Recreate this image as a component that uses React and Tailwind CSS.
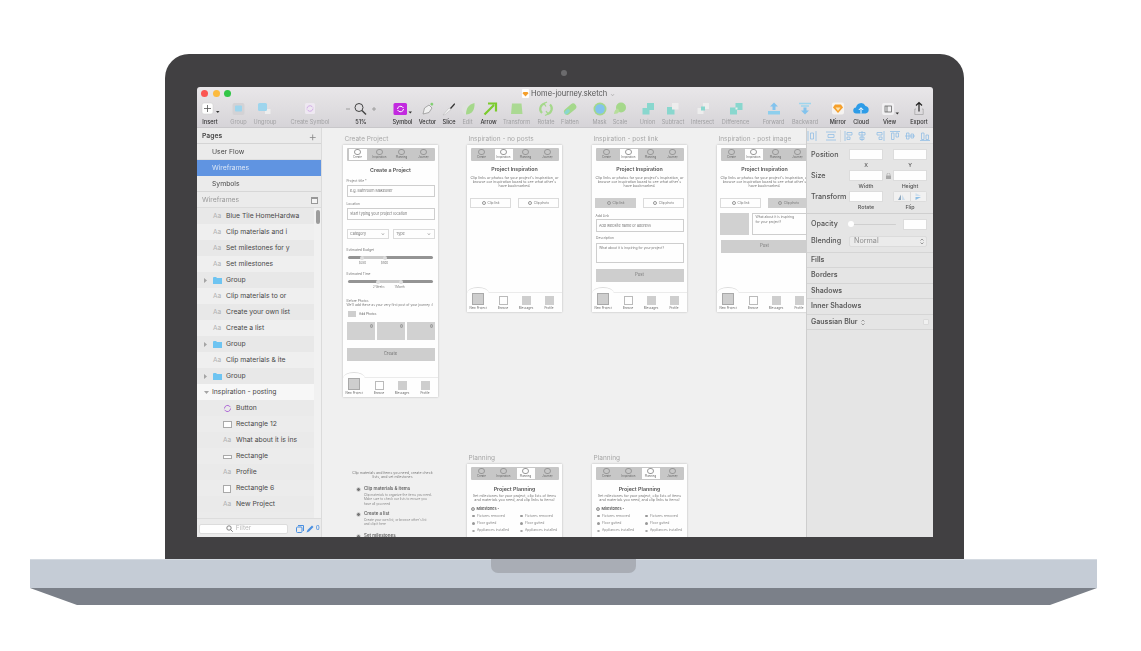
import React from "react";

const G = "#a6d98c";
const T = "#8ad8cf";

const Sync = ({ x, y, c = "#fff" }) => (
  <g fill="none" stroke={c} strokeWidth="1">
    <path d={`M${x + 1} ${y + 4}a3 3 0 0 1 5-2l1 1M${x + 7} ${y + 4}a3 3 0 0 1-5 2l-1-1`} />
  </g>
);

const toolIcons = {
  insert: (
    <>
      <rect x="0" y="3" width="11" height="11" rx="2" fill="#fff" stroke="#ccc" strokeWidth=".5" />
      <path d="M2 8.500h7M5.500 5v7" stroke="#555" strokeWidth=".8" />
      <path d="M14 11h3.500l-1.700 2z" fill="#333" />
    </>
  ),
  group: (
    <>
      <rect x="1.500" y="3" width="12" height="12" rx="2" fill="#d4d3d6" />
      <rect x="4" y="5.500" width="7" height="6" rx="1" fill="#9fd6ee" />
    </>
  ),
  ungroup: (
    <>
      <rect x="8" y="9" width="5.500" height="5" fill="#eeeeee" />
      <rect x="1" y="3" width="9" height="8" rx="1.500" fill="#9fd6ee" />
    </>
  ),
  symbolOff: (
    <>
      <rect x="3" y="3" width="10" height="11" rx="1.500" fill="#efe9f2" />
      <Sync x={4} y={4.500} c="#d3aee8" />
    </>
  ),
  zoom: (
    <>
      <path d="M-7 9h4M19 9h4M21 7v4" stroke="#999" strokeWidth=".9" />
      <circle cx="6" cy="7.500" r="4" fill="none" stroke="#444" strokeWidth="1" />
      <path d="M9 10.500l4 4" stroke="#444" strokeWidth="1.400" />
    </>
  ),
  symbol: (
    <>
      <rect x="-1.500" y="3" width="13.500" height="12" rx="1.500" fill="#c32be0" />
      <Sync x={1.500} y={5} c="#fff" />
      <path d="M13.500 11.500H17l-1.700 2z" fill="#333" />
    </>
  ),
  vector: (
    <>
      <path d="M3 14l1.500-6 4.500-3 3 3-3 4.500z" fill="#f2f2f2" stroke="#8d8d8d" strokeWidth=".7" />
      <path d="M10 4l2-1.500 1.500 1.500-1.500 2z" fill="#80d070" />
    </>
  ),
  slice: (
    <>
      <path d="M2 15l6-7 2 1.500-6 5z" fill="#f5f5f5" stroke="#aaa" strokeWidth=".4" />
      <path d="M9 8l4.500-5 .5 1.500-4 4.500z" fill="#333" />
    </>
  ),
  edit: (
    <>
      <circle cx="7" cy="9" r="5.500" fill="#e2e2e2" />
      <path d="M14.500 3c.5 6-2 11.500-8.500 11.500 0-6 2.500-10 8.500-11.500z" fill={G} />
    </>
  ),
  arrow: <path d="M3.500 14.500L13 5M7 3.500h8v8" fill="none" stroke="#7ccc2e" strokeWidth="2.200" />,
  transform: <path d="M3 3.500h9.500l1 10.500h-11.500z" fill={G} opacity=".9" />,
  rotate: (
    <g fill="none" stroke={G} strokeWidth="2.200">
      <path d="M7 3.500a5.500 5.500 0 0 0-3 9.500" />
      <path d="M9 14a5.500 5.500 0 0 0 3-9.500" />
      <path d="M9 2l-3 1.500 2 3M7 15.500l3-1.500-2-3" strokeWidth="1.300" />
    </g>
  ),
  flatten: (
    <>
      <rect x="1" y="6" width="14" height="6.500" rx="3.200" fill={G} transform="rotate(-40 8 9)" />
      <rect x="1" y="7.500" width="6" height="3.500" rx="1.700" fill={T} transform="rotate(-40 8 9)" />
    </>
  ),
  mask: (
    <>
      <circle cx="8" cy="9" r="6.500" fill={G} />
      <circle cx="8" cy="9" r="4.800" fill="#84c4ee" />
    </>
  ),
  scale: (
    <>
      <circle cx="9" cy="7.500" r="5" fill={G} />
      <path d="M2 14c.2-3 1.500-5 4-5.500l1.500 3c-1.200 1.700-3 2.500-5.500 2.500z" fill="#b8df9d" />
    </>
  ),
  union: <path d="M7 3h7v7H9.500v4.500h-7V8H7z" fill={T} />,
  subtract: (
    <>
      <rect x="2" y="7" width="7.500" height="7.500" fill={T} />
      <rect x="7" y="3" width="6.500" height="6.500" fill="#eeeeee" />
    </>
  ),
  intersect: (
    <>
      <rect x="2.500" y="8" width="6" height="6" fill="#eeeeee" />
      <rect x="8" y="3" width="6" height="6" fill="#eeeeee" />
      <rect x="6" y="6.500" width="4" height="4" fill={T} />
    </>
  ),
  difference: (
    <>
      <rect x="2" y="7.500" width="7" height="7" fill={T} />
      <rect x="7.500" y="3" width="7" height="7" fill={T} />
      <rect x="7.500" y="7.500" width="2" height="2" fill="#eeeeee" />
    </>
  ),
  forward: (
    <>
      <path d="M8 2.500l4 4h-2.500V10h-3V6.500H4z" fill="#84c4ee" />
      <rect x="2" y="11" width="12" height="3.500" fill="#8fd0ee" />
    </>
  ),
  backward: (
    <>
      <path d="M2 3.500h12M4 6h8" stroke="#9fd6ee" strokeWidth="1.400" />
      <path d="M6.500 7.500h3v3H12l-4 4-4-4h2.500z" fill="#84c4ee" />
    </>
  ),
  mirror: (
    <>
      <rect x="2" y="2.500" width="12" height="12" rx="2" fill="#f6f4f2" />
      <path d="M5 4.500h6l2 3-5 5.500-5-5.500z" fill="#f6a02c" />
      <path d="M5.500 7.500h5L8 11z" fill="#fde3ae" />
    </>
  ),
  cloud: (
    <>
      <path d="M3.500 13.500a3 3 0 0 1-.5-6 5 5 0 0 1 9.500-1.500 3.800 3.800 0 0 1 0 7.500z" fill="#2f9de8" />
      <path d="M8 13.500V8M5.800 10l2.200-2.300L10.200 10" fill="none" stroke="#fff" strokeWidth="1" />
    </>
  ),
  view: (
    <>
      <rect x="0" y="3" width="12" height="12" rx="2" fill="#f2f1f3" />
      <rect x="3" y="6" width="6.500" height="6" fill="none" stroke="#555" strokeWidth=".7" />
      <path d="M5 6v6" stroke="#555" strokeWidth=".7" />
      <path d="M13.500 12.500H17l-1.700 2z" fill="#333" />
    </>
  ),
  export: (
    <>
      <path d="M8 2.500v9M5 5.500l3-3 3 3" fill="none" stroke="#222" strokeWidth="1.200" />
      <path d="M5 9H3.800v5.500h8.400V9H11" fill="none" stroke="#999" strokeWidth=".6" />
    </>
  ),
};

const tools = [
  ["Insert", "insert", "w-[26px]", 1],
  ["Group", "group", "w-[31px]", 0],
  ["Ungroup", "ungroup", "w-[22px]", 0],
  ["Create Symbol", "symbolOff", "w-[68px]", 0],
  ["51%", "zoom", "w-[34px]", 1],
  ["Symbol", "symbol", "w-[25px] ml-[12px]", 1],
  ["Vector", "vector", "w-[25px]", 1],
  ["Slice", "slice", "w-[18px]", 1],
  ["Edit", "edit", "w-[19px]", 0],
  ["Arrow", "arrow", "w-[23px]", 1],
  ["Transform", "transform", "w-[33px]", 0],
  ["Rotate", "rotate", "w-[26px]", 0],
  ["Flatten", "flatten", "w-[22px]", 0],
  ["Mask", "mask", "w-[23px] ml-[7px]", 0],
  ["Scale", "scale", "w-[18px]", 0],
  ["Union", "union", "w-[21px] ml-[8px]", 0],
  ["Subtract", "subtract", "w-[30px]", 0],
  ["Intersect", "intersect", "w-[29px]", 0],
  ["Difference", "difference", "w-[37px]", 0],
  ["Forward", "forward", "w-[39px]", 0],
  ["Backward", "backward", "w-[24px]", 0],
  ["Mirror", "mirror", "w-[22px] ml-[10px]", 1],
  ["Cloud", "cloud", "w-[24px]", 1],
  ["View", "view", "w-[33px]", 1],
  ["Export", "export", "w-[26px]", 1],
];

function Toolbar() {
  return (
    <div className="h-[41px] shrink-0 bg-gradient-to-b from-[#eae8ea] to-[#d7d5d9] border-b border-[#c9c8cb] flex flex-col">
      <div className="h-[13px] flex items-center relative shrink-0">
        <div className="flex gap-[4.500px] ml-[4px]">
          <span className="w-[7px] h-[7px] rounded-full bg-[#fc5753]" />
          <span className="w-[7px] h-[7px] rounded-full bg-[#fdbc40]" />
          <span className="w-[7px] h-[7px] rounded-full bg-[#33c748]" />
        </div>
        <div className="absolute left-[325px] top-[1px] flex items-center gap-[2px] text-[7.500px] text-[#555]">
          <svg width="7" height="9" viewBox="0 0 7 9">
            <rect width="7" height="9" rx="1" fill="#fff" />
            <path d="M1.500 3h4l1 1.300L3.500 7.500.5 4.300z" fill="#f6a02c" />
          </svg>
          Home-journey.sketch
          <span className="text-[#aaa] text-[6px] ml-[1px]">⌄</span>
        </div>
      </div>
      <div className="flex flex-1">
        {tools.map(([label, icon, cls, on]) => (
          <div key={label} className={`${cls} flex flex-col items-center shrink-0`}>
            <svg width="44" height="16" viewBox="-14 0 44 16" className="shrink-0 overflow-visible">
              {toolIcons[icon]}
            </svg>
            <span className={`whitespace-nowrap text-[5.600px] leading-[9px] mt-[1.500px] ${on ? "text-[#333] font-medium" : "text-[#a2a2a4]"}`}>{label}</span>
          </div>
        ))}
      </div>
    </div>
  );
}

const Folder = () => (
  <svg width="9" height="7" viewBox="0 0 9 7"><path d="M0 1q0-1 1-1h2l1 1h5v6H0z" fill="#6fc5f2" /></svg>
);
const Tri = ({ open }) => (
  <svg width="5" height="5" viewBox="0 0 5 5">
    <path d={open ? "M0 1h5L2.500 4z" : "M1 0l3 2.500L1 5z"} fill="#a5a5a5" />
  </svg>
);

const layers = [
  ["Aa", "Blue Tile HomeHardwa"],
  ["Aa", "Clip materials and i"],
  ["Aa", "Set milestones for y"],
  ["Aa", "Set milestones"],
  ["folder", "Group"],
  ["Aa", "Clip materials to or"],
  ["Aa", "Create your own list"],
  ["Aa", "Create a list"],
  ["folder", "Group"],
  ["Aa", "Clip materials & ite"],
  ["folder", "Group"],
];
const nested = [
  ["sync", "Button"],
  ["rect", "Rectangle 12"],
  ["Aa", "What about it is ins"],
  ["flat", "Rectangle"],
  ["Aa", "Profile"],
  ["box", "Rectangle 6"],
  ["Aa", "New Project"],
];

function LayerGlyph({ type }) {
  if (type === "Aa") return <span className="text-[6.500px] text-[#b0b0b0]">Aa</span>;
  if (type === "sync")
    return (
      <svg width="9" height="9" viewBox="0 0 9 9" fill="none" stroke="#b06ad8" strokeWidth="1">
        <path d="M1.500 4.500a3 3 0 0 1 5-2.300l1 1M7.500 4.500a3 3 0 0 1-5 2.300l-1-1" />
      </svg>
    );
  if (type === "rect") return <span className="block w-[9px] h-[7px] border border-[#aaa] bg-white" />;
  if (type === "flat") return <span className="block w-[9px] h-[4px] border border-[#aaa] bg-white" />;
  return <span className="block w-[8px] h-[8px] border border-[#aaa] bg-white" />;
}

function Sidebar() {
  return (
    <aside className="w-[125px] shrink-0 flex flex-col bg-[#ececec] border-r border-[#dcdcdc] overflow-hidden text-[6.800px] text-[#4a4a4a]">
      <div className="h-[16px] shrink-0 flex items-center justify-between pl-[5px] pr-[4px] pt-[1px] font-semibold border-b border-[#d5d5d5]">
        Pages
        <span className="text-[13px] font-light text-[#888] leading-none">+</span>
      </div>
      <div className="h-[16px] shrink-0 flex items-center pl-[15px] pt-[1px] border-b border-[#e0e0e0]">User Flow</div>
      <div className="h-[16px] shrink-0 flex items-center pl-[15px] pt-[1px] bg-[#6195e2] text-[#dce7f7]">Wireframes</div>
      <div className="h-[16px] shrink-0 flex items-center pl-[15px] pt-[1px] border-b border-[#d8d8d8]">Symbols</div>
      <div className="h-[16px] shrink-0 flex items-center justify-between pl-[5px] pr-[3px] pt-[2px] text-[#9b9b9b] border-b border-[#dddddd]">
        Wireframes
        <span className="w-[7px] h-[7px] border border-[#999] bg-[#f5f5f5] border-t-2" />
      </div>
      <div className="flex flex-1 min-h-0">
        <div className="w-[117px] shrink-0 overflow-hidden">
          {layers.map(([type, name], i) => (
            <div key={i} className="h-[16px] pt-[1px] flex items-center odd:bg-[#e9e9e9] even:bg-[#f0f0f0]">
              <div className="w-[16px] flex justify-end pr-[5px]">{type === "folder" && <Tri />}</div>
              <div className="w-[13px]">{type === "folder" ? <Folder /> : <LayerGlyph type="Aa" />}</div>
              <span className="whitespace-nowrap">{name}</span>
            </div>
          ))}
          <div className="h-[16px] pt-[1px] flex items-center bg-[#f8f8f8]">
            <div className="w-[15px] flex justify-end pr-[3px]"><Tri open /></div>
            <span className="whitespace-nowrap">Inspiration - posting</span>
          </div>
          {nested.map(([type, name], i) => (
            <div key={i} className="h-[16px] pt-[1px] flex items-center odd:bg-[#ebebeb] even:bg-[#ededed]">
              <div className="w-[26px]" />
              <div className="w-[13px]"><LayerGlyph type={type} /></div>
              <span className="whitespace-nowrap">{name}</span>
            </div>
          ))}
        </div>
        <div className="flex-1 flex justify-center pt-[2px] bg-[#f2f2f2]">
          <span className="w-[4px] h-[14px] rounded-full bg-[#9d9d9d]" />
        </div>
      </div>
      <div className="h-[19px] shrink-0 flex items-center gap-[8px] pl-[2px] pt-[1px] bg-[#ececec] border-t border-[#dedede]">
        <div className="w-[89px] h-[10px] bg-white rounded-[2px] border border-[#ddd] flex items-center justify-center gap-[3px] pr-[10px] text-[6.500px] text-[#bbb]">
          <svg width="7" height="7" viewBox="0 0 7 7" fill="none" stroke="#777" strokeWidth=".9"><circle cx="3" cy="3" r="2.200" /><path d="M4.600 4.600L6.800 6.800" /></svg>
          Filter
        </div>
        <div className="flex items-center gap-[2px] text-[5.500px] text-[#4a90e2] font-semibold">
          <svg width="8" height="8" viewBox="0 0 8 8" fill="none" stroke="#4a90e2" strokeWidth="1"><rect x=".500" y="2" width="5.500" height="5.500" rx="1" /><path d="M2 .500h5.500V6" /></svg>
          <svg width="8" height="8" viewBox="0 0 8 8"><path d="M.500 7.500l1-2.500 4.500-4.500 1.500 1.500L3 6.500z" fill="#4a90e2" /></svg>
          0
        </div>
      </div>
    </aside>
  );
}

function Tabs({ active }) {
  const names = ["Create", "Inspiration", "Planning", "Journey"];
  return (
    <div className="h-[13.500px] mx-[3.500px] mt-[2.500px] bg-[#c8c8c8] rounded-[1px] flex shrink-0 py-[1.300px]">
      {names.map((n) => (
        <div key={n} className="flex-1 flex justify-center">
          <div className={`w-[18px] flex flex-col items-center ${n === active ? "bg-white" : ""}`}>
            <span className="w-[6.500px] h-[6.500px] rounded-full border-[0.5px] border-[#999]" />
            <span className="text-[2.800px] leading-[4px] text-[#666] whitespace-nowrap">{n}</span>
          </div>
        </div>
      ))}
    </div>
  );
}

function NavBar() {
  const items = [["Browse", "bg-white border-[0.5px] border-[#bbb]"], ["Messages", "bg-[#cfcfcf]"], ["Profile", "bg-[#cfcfcf]"]];
  return (
    <div className="relative h-[20.500px] border-t border-[#ececec] flex shrink-0 px-[3px] pt-[0.5px]">
      <span className="absolute left-0 -top-[6px] w-[22px] h-[6px] bg-white [border-radius:50%_50%_0_0/100%_100%_0_0] border-t border-[#dedede]" />
      <div className="w-[16px] flex flex-col items-center relative">
        <span className="w-[12.500px] h-[12.500px] -mt-[0.5px] bg-[#cfcfcf] border-[0.5px] border-[#aaa] shrink-0" />
        <span className="text-[3px] leading-[4px] mt-[1px] whitespace-nowrap text-[#666]">New Project</span>
      </div>
      <div className="flex-1 flex pl-[7px] gap-[3px]">
        {items.map(([n, cls]) => (
          <div key={n} className="w-[20px] flex flex-col items-center pt-[3px]">
            <span className={`w-[9px] h-[9px] ${cls}`} />
            <span className="text-[3px] leading-[4px] mt-[1px] text-[#666]">{n}</span>
          </div>
        ))}
      </div>
    </div>
  );
}

const BoardTitle = ({ children, cls = "mt-[4px]" }) => (
  <div className={`text-center text-[5.300px] font-semibold text-[#555] leading-[8px] ${cls}`}>{children}</div>
);
const BoardBody = ({ children, cls = "mt-[2.500px]" }) => (
  <div className={`text-center text-[3.650px] leading-[4.400px] text-[#777] whitespace-pre-line ${cls}`}>{children}</div>
);
const Small = ({ children, cls = "" }) => (
  <div className={`text-[3.300px] leading-[4px] text-[#777] ${cls}`}>{children}</div>
);

function ClipButtons({ active }) {
  const btn = (label) => (
    <div className={`w-[41px] h-[9.500px] flex items-center justify-center gap-[1.500px] text-[3.200px] text-[#777] ${active === label ? "bg-[#cfcfcf]" : "bg-white border border-[#dcdcdc]"}`}>
      <span className="w-[4.500px] h-[4.500px] rounded-full border-[0.5px] border-[#999]" />
      {label}
    </div>
  );
  return (
    <div className="flex justify-between mx-[3px] mt-[9.500px]">
      {btn("Clip link")}
      {btn("Clip photo")}
    </div>
  );
}

const inspireCopy = "Clip links or photos for your project's inspiration, or\nbrowse our inspiration board to see what other's\nhave bookmarked.";

function Field({ label, box, children, cls = "" }) {
  return (
    <div className={`mx-[3.500px] ${cls}`}>
      <Small>{label}</Small>
      <div className={`${box} border border-[#cfcfcf] flex items-center px-[2.500px] text-[3.700px] text-[#777]`}>{children}</div>
    </div>
  );
}

function Slider({ a, b, fill, h1, h2, labels }) {
  return (
    <div className="mx-[5px] mt-[4px]">
      <div className="relative h-[3px] rounded-full bg-[#959595]">
        <span className={`absolute top-0 h-[3px] bg-[#cbcbcb] ${fill}`} />
        <span className={`absolute -top-[0.5px] w-[4px] h-[4px] rounded-full bg-[#dedede] ${h1}`} />
        <span className={`absolute -top-[0.5px] w-[4px] h-[4px] rounded-full bg-[#dedede] ${h2}`} />
      </div>
      <div className={`flex text-[2.800px] leading-[4px] text-[#777] mt-[1.500px] ${labels}`}>
        <span>{a}</span>
        <span>{b}</span>
      </div>
    </div>
  );
}

function CreateBoard() {
  return (
    <div className="h-full flex flex-col">
      <Tabs active="Create" />
      <BoardTitle cls="mt-[5px]">Create a Project</BoardTitle>
      <Field label="Project title *" box="h-[12px] mt-[2px]" cls="mt-[5px]">e.g. Bathroom Makeover</Field>
      <Field label="Location" box="h-[12px] mt-[2px]" cls="mt-[5px]">Start typing your project location</Field>
      <div className="flex justify-between mx-[3.500px] mt-[9px] text-[3.700px] text-[#777]">
        <div className="w-[42px] h-[9.500px] border border-[#dcdcdc] flex items-center justify-between px-[2.500px]">Category<span className="text-[5px] leading-none">⌄</span></div>
        <div className="w-[42px] h-[9.500px] border border-[#dcdcdc] flex items-center justify-between px-[2.500px]">Type<span className="text-[5px] leading-none">⌄</span></div>
      </div>
      <Small cls="mx-[3.500px] mt-[9.500px]">Estimated Budget</Small>
      <Slider a="$350" b="$500" fill="left-[14px] w-[23px]" h1="left-[12px]" h2="left-[35px]" labels="pl-[11px] gap-[15px]" />
      <Small cls="mx-[3.500px] mt-[7.500px]">Estimated Time</Small>
      <Slider a="2 Weeks" b="1 Month" fill="left-[30px] w-[23px]" h1="left-[28px]" h2="left-[51px]" labels="pl-[25px] gap-[10px]" />
      <Small cls="mx-[3.500px] mt-[10.500px]">Before Photos</Small>
      <Small cls="mx-[3.500px] whitespace-nowrap">We'll add these as your very first post of your journey :)</Small>
      <div className="flex items-center gap-[3px] mx-[5px] mt-[3.750px] text-[3.200px] text-[#666]">
        <span className="w-[8px] h-[6.500px] bg-[#cfcfcf]" />
        Add Photos
      </div>
      <div className="flex gap-[2px] mx-[3.500px] mt-[4.750px]">
        {[0, 1, 2].map((i) => (
          <div key={i} className="relative flex-1 h-[18px] bg-[#d2d2d2]">
            <span className="absolute top-[2px] right-[1.500px] w-[3.500px] h-[3.500px] rounded-full bg-[#bbb] border-[0.5px] border-[#999]" />
          </div>
        ))}
      </div>
      <div className="mx-[3.500px] mt-[8px] h-[13px] bg-[#cfcfcf] flex items-center justify-center text-[4.300px] text-[#777]">Create</div>
      <div className="flex-1" />
      <NavBar />
    </div>
  );
}

function NoPostsBoard() {
  return (
    <div className="h-full flex flex-col">
      <Tabs active="Inspiration" />
      <BoardTitle>Project Inspiration</BoardTitle>
      <BoardBody>{inspireCopy}</BoardBody>
      <ClipButtons />
      <div className="flex-1" />
      <NavBar />
    </div>
  );
}

function PostLinkBoard() {
  return (
    <div className="h-full flex flex-col">
      <Tabs active="Inspiration" />
      <BoardTitle>Project Inspiration</BoardTitle>
      <BoardBody>{inspireCopy}</BoardBody>
      <ClipButtons active="Clip link" />
      <Field label="Add Link" box="h-[13px] mt-[1px]" cls="mt-[6.300px]">Add website name or address</Field>
      <Small cls="mx-[4px] mt-[4px]">Description</Small>
      <div className="mx-[3.500px] mt-[3px] h-[20px] border border-[#cfcfcf] px-[2.500px] py-[1.500px] text-[3.300px] text-[#777]">What about it is inspiring for your project?</div>
      <div className="mx-[3.500px] mt-[6px] h-[13px] bg-[#cfcfcf] flex items-center justify-center text-[4.300px] text-[#777]">Post</div>
      <div className="flex-1" />
      <NavBar />
    </div>
  );
}

function PostImageBoard() {
  return (
    <div className="h-full flex flex-col">
      <Tabs active="Inspiration" />
      <BoardTitle>Project Inspiration</BoardTitle>
      <BoardBody>{inspireCopy}</BoardBody>
      <ClipButtons active="Clip photo" />
      <div className="flex gap-[3px] mx-[3px] mt-[5px] h-[22px]">
        <div className="w-[29px] bg-[#d2d2d2]" />
        <div className="flex-1 border border-[#cfcfcf] px-[2.500px] py-[1.500px] text-[3.300px] leading-[4.500px] text-[#777]">What about it is inspiring<br />for your project?</div>
      </div>
      <div className="mx-[4px] mt-[5px] h-[13.500px] bg-[#cfcfcf] flex items-center justify-center text-[4.300px] text-[#777]">Post</div>
      <div className="flex-1" />
      <NavBar />
    </div>
  );
}

function PlanningBoard() {
  const rows = [["Fixtures removed", 1], ["Floor gutted", 1], ["Appliances installed", 0]];
  return (
    <div className="flex flex-col">
      <Tabs active="Planning" />
      <BoardTitle cls="mt-[4.700px]">Project Planning</BoardTitle>
      <BoardBody cls="mt-[1px]">{"Set milestones for your project, clip lists of items\nand materials you need, and clip links to items!"}</BoardBody>
      <div className="flex items-center gap-[1.500px] mx-[4px] mt-[3.800px] h-[4.600px] text-[3.800px] font-semibold text-[#555]">
        <span className="w-[4px] h-[4px] rounded-full bg-[#ccc] border-[0.5px] border-[#999]" />
        Milestones -
      </div>
      <div className="grid grid-cols-[48px_1fr] mx-[5px] mt-[1.600px]">
        {rows.flatMap(([t, on]) => [0, 1].map((c) => (
          <div key={t + c} className="flex items-center gap-[2.500px] h-[7.400px] text-[3.400px] text-[#888] whitespace-nowrap">
            <span className={`w-[2.500px] h-[2.500px] rounded-full ${on ? "bg-[#999]" : "bg-white border-[0.5px] border-[#aaa]"}`} />
            {t}
          </div>
        )))}
      </div>
    </div>
  );
}

function Artboard({ title, cls, children }) {
  return (
    <div className={`absolute w-[95px] ${cls}`}>
      <div className="absolute -top-[10px] left-[1.500px] text-[6.500px] leading-[8px] text-[#a8a8a8] whitespace-nowrap">{title}</div>
      <div className="h-full bg-white shadow-[0_0_2px_rgba(0,0,0,0.25)]">{children}</div>
    </div>
  );
}

function IntroStep({ title, lines, cls = "" }) {
  return (
    <div className={`flex gap-[3px] ${cls}`}>
      <span className="w-[5px] h-[5px] mt-[1px] rounded-full bg-[#777] border border-[#ddd] shrink-0" />
      <div>
        <div className="text-[4.450px] leading-[6px] font-semibold text-[#666] whitespace-nowrap">{title}</div>
        <div className="mt-[1px]">
          {lines.map((l) => (
            <div key={l} className="text-[3.150px] leading-[4.200px] text-[#888] whitespace-nowrap">{l}</div>
          ))}
        </div>
      </div>
    </div>
  );
}

function Canvas() {
  return (
    <main className="relative flex-1 min-w-0 overflow-hidden bg-[#f1f1f1]">
      <Artboard title="Create Project" cls="left-[21px] top-[17px] h-[252px]"><CreateBoard /></Artboard>
      <Artboard title="Inspiration - no posts" cls="left-[145px] top-[17px] h-[167px]"><NoPostsBoard /></Artboard>
      <Artboard title="Inspiration - post link" cls="left-[270px] top-[17px] h-[167px]"><PostLinkBoard /></Artboard>
      <Artboard title="Inspiration - post image" cls="left-[395px] top-[17px] h-[167px]"><PostImageBoard /></Artboard>
      <Artboard title="Planning" cls="left-[145px] top-[336px] h-[100px]"><PlanningBoard /></Artboard>
      <Artboard title="Planning" cls="left-[270px] top-[336px] h-[100px]"><PlanningBoard /></Artboard>
      <div className="absolute left-[28px] top-[343px] w-[85px]">
        <div className="text-center text-[3.550px] leading-[4.400px] text-[#777]">Clip materials and items you need, create check<br />lists, and set milestones</div>
        <IntroStep cls="mt-[6.400px] ml-[6px]" title="Clip materials & items" lines={["Clip materials to organize the items you need.", "Make sure to check our lists to ensure you", "have all you need"]} />
        <IntroStep cls="mt-[5.400px] ml-[6px]" title="Create a list" lines={["Create your own list, or browse other's list", "and clip it here"]} />
        <IntroStep cls="mt-[6.300px] ml-[6px]" title="Set milestones" lines={[]} />
      </div>
    </main>
  );
}

const alignIcons = [
  ["M1 1v10M9 1v10M3.500 3h3v6h-3z", ""],
  ["M1 2h10M1 10h10M3 4.500h6v3H3z", "ml-[6px]"],
  ["M3 1v10M5 2.500h5v2.500H5zM5 7h3v2.500H5z", "ml-[1px]"],
  ["M6 1v10M3 2.500h6v2.500H3zM4 7h4v2.500H4z", "ml-[2px]"],
  ["M9 1v10M2 2.500h5v2.500H2zM4 7h3v2.500H4z", "ml-[7px]"],
  ["M1 1.500h10M2.500 3h2.500v6.500H2.500zM7 3h2.500v4H7z", "ml-[2px]"],
  ["M1 6h10M2.500 3h2.500v6H2.500zM7 4h2.500v4H7z", "ml-[2.500px]"],
  ["M1 10.500h10M2.500 3h2.500v6.500H2.500zM7 5h2.500v4.500H7z", "ml-[3px]"],
];

function Inspector() {
  const input = "h-[11px] bg-white border border-[#dddddd]";
  const caption = "text-center text-[5.300px] leading-[8px] mt-[0.5px]";
  const section = "h-[15.600px] flex items-center pl-[4px] border-b border-[#d6d6d6] text-[7px] font-semibold text-[#5c5c5c]";
  return (
    <aside className="w-[127px] shrink-0 bg-[#e6e6e6] border-l border-[#cfcfcf] text-[7.200px] text-[#555] flex flex-col overflow-hidden">
      <div className="h-[16px] shrink-0 flex items-center border-b border-[#dcdcdc] bg-[#ebebeb]">
        {alignIcons.map(([d, m], i) => (
          <React.Fragment key={i}>
            <svg width="12" height="12" viewBox="0 0 12 12" className={`shrink-0 ${m}`}>
              <path d={d} fill="none" stroke="#93bfe6" strokeWidth=".8" />
            </svg>
            {i === 1 && <span className="w-px h-[12px] ml-[3px] bg-[#dcdcdc]" />}
          </React.Fragment>
        ))}
      </div>
      <div className="pl-[4px] pr-[5px] pt-[5px] font-medium">
        <div className="flex items-start">
          <span className="w-[38px] leading-[12px]">Position</span>
          <div className="w-[34px]"><div className={input} /><div className={caption}>X</div></div>
          <div className="w-[34px] ml-[10px]"><div className={input} /><div className={caption}>Y</div></div>
        </div>
        <div className="flex items-start mt-[1.500px]">
          <span className="w-[38px] leading-[12px]">Size</span>
          <div className="w-[34px]"><div className={input} /><div className={caption}>Width</div></div>
          <div className="w-[10px] flex justify-center pt-[3px]">
            <svg width="5" height="6" viewBox="0 0 5 6"><rect y="2.500" width="5" height="3.500" fill="#aaa" /><path d="M1 2.500V1.500a1.500 1.500 0 0 1 3 0v1" fill="none" stroke="#aaa" strokeWidth=".7" /></svg>
          </div>
          <div className="w-[34px]"><div className={input} /><div className={caption}>Height</div></div>
        </div>
        <div className="flex items-start mt-[1.500px]">
          <span className="w-[38px] leading-[12px]">Transform</span>
          <div className="w-[34px]"><div className={input} /><div className={caption}>Rotate</div></div>
          <div className="w-[34px] ml-[10px]">
            <div className="h-[11px] bg-[#f2f2f2] rounded-[1.500px] border border-[#dddddd] flex">
              <div className="flex-1 flex items-center justify-center border-r border-[#ddd]">
                <svg width="7" height="6" viewBox="0 0 7 6"><path d="M3 .500V6H0z" fill="#8fa8be" /><path d="M4 .500V6h3z" fill="#cfe0ee" /></svg>
              </div>
              <div className="flex-1 flex items-center justify-center">
                <svg width="6" height="7" viewBox="0 0 6 7"><path d="M.500 3h5.500L.500 0z" fill="#cfe0ee" /><path d="M.500 4h5.500L.500 7z" fill="#8fc0e6" /></svg>
              </div>
            </div>
            <div className="text-center text-[5.300px] leading-[8px] mt-[1px]">Flip</div>
          </div>
        </div>
      </div>
      <div className="mt-[2px] border-b border-[#d0d0d0]" />
      <div className="pl-[4px] pr-[5px] pt-[5px] pb-[4.500px] border-b border-[#d6d6d6] font-medium">
        <div className="flex items-center h-[11px]">
          <span className="w-[38px]">Opacity</span>
          <div className="relative w-[47px] h-[1.500px] bg-[#d0d0d0] rounded-full">
            <span className="absolute -left-[1px] -top-[2.500px] w-[6px] h-[6px] rounded-full bg-white" />
          </div>
          <div className="w-[24px] ml-[7px]"><div className={input} /></div>
        </div>
        <div className="flex items-center h-[11px] mt-[6px]">
          <span className="w-[38px]">Blending</span>
          <div className="w-[78px] h-[11px] rounded-[2px] bg-[#ececec] border border-[#dcdcdc] flex items-center justify-between pl-[4px] pr-[2px] text-[#8f8f8f] font-normal">
            Normal
            <svg width="4" height="7" viewBox="0 0 4 7" fill="none" stroke="#777" strokeWidth=".7"><path d="M.500 2.500L2 1l1.500 1.500M.500 4.500L2 6l1.500-1.500" /></svg>
          </div>
        </div>
      </div>
      <div className={section}>Fills</div>
      <div className={section}>Borders</div>
      <div className={section}>Shadows</div>
      <div className={section}>Inner Shadows</div>
      <div className={`${section} justify-between pr-[4px]`}>
        <span className="flex items-center gap-[3px]">
          Gaussian Blur
          <svg width="4" height="7" viewBox="0 0 4 7" fill="none" stroke="#777" strokeWidth=".7"><path d="M.500 2.500L2 1l1.500 1.500M.500 4.500L2 6l1.500-1.500" /></svg>
        </span>
        <span className="w-[6px] h-[6px] rounded-[1px] bg-[#f2f2f2] border border-[#dcdcdc]" />
      </div>
    </aside>
  );
}

export default function App() {
  return (
    <div className="w-[1141px] h-[651px] bg-white overflow-hidden font-['Inter',sans-serif]">
      <div className="pt-[54px]">
        <div className="ml-[165px] w-[799px] h-[505px] rounded-t-[24px] bg-[#414042] relative pl-[32px] pt-[33px]">
          <span className="absolute left-[396px] top-[16px] w-[6px] h-[6px] rounded-full bg-[#6b6b6d]" />
          <div className="w-[736px] h-[450px] flex flex-col overflow-hidden rounded-t-[3px] blur-[0.5px] opacity-[.999] will-change-[opacity]">
            <Toolbar />
            <div className="flex flex-1 min-h-0">
              <Sidebar />
              <Canvas />
              <Inspector />
            </div>
          </div>
        </div>
        <div className="ml-[30px] w-[1067px]">
          <div className="h-[29px] bg-[#c5ccd6] border-t border-[#d4dae1] flex justify-center">
            <div className="w-[145px] h-[14px] -mt-px bg-[#a9adb5] rounded-b-[7px]" />
          </div>
          <div className="h-[17px] bg-[#7b8089] [clip-path:polygon(0_0,100%_0,calc(100%-47px)_100%,47px_100%)]" />
        </div>
      </div>
    </div>
  );
}
